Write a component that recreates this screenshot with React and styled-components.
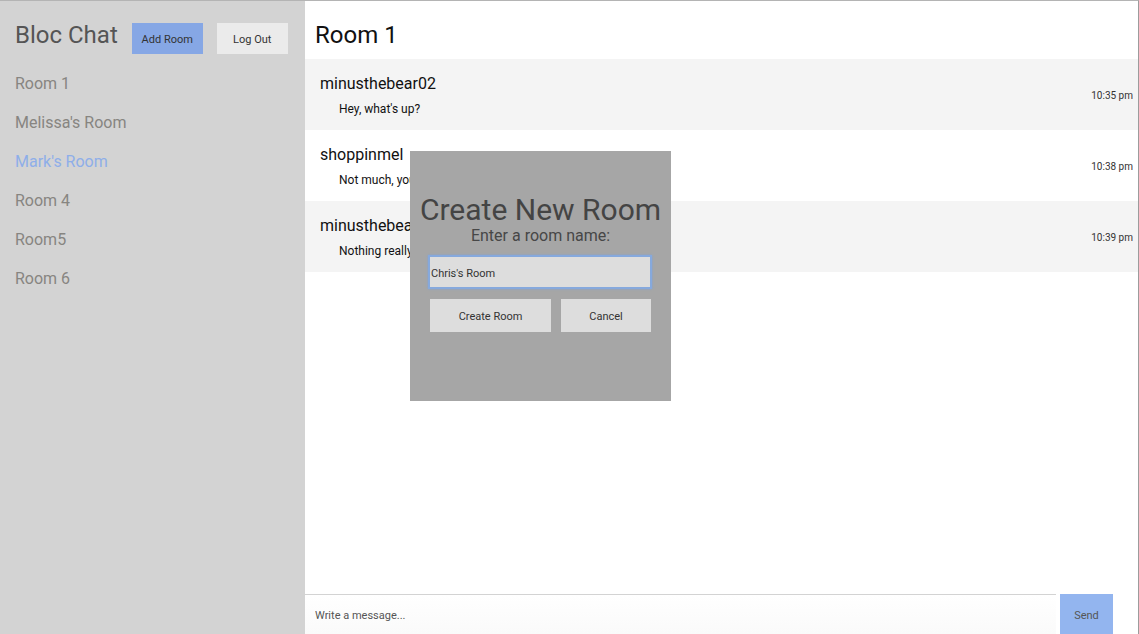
import React, { useState } from "react";
import styled, { createGlobalStyle } from "styled-components";

const GlobalStyle = createGlobalStyle`
  html, body {
    margin: 0;
    padding: 0;
    background: #ffffff;
  }
  body {
    font-family: Roboto, "Liberation Sans", Arial, sans-serif;
  }
  * {
    box-sizing: border-box;
  }
`;

const rooms = ["Room 1", "Melissa's Room", "Mark's Room", "Room 4", "Room5", "Room 6"];

const messages = [
  { user: "minusthebear02", text: "Hey, what's up?", time: "10:35 pm" },
  { user: "shoppinmel", text: "Not much, you?", time: "10:38 pm" },
  { user: "minusthebear02", text: "Nothing really.", time: "10:39 pm" },
];

const App = () => {
  const [active] = useState("Mark's Room");
  const [roomName, setRoomName] = useState("Chris's Room");

  return (
    <>
      <GlobalStyle />
      <Layout>
        <Sidebar>
          <SidebarHeader>
            <AppTitle>Bloc Chat</AppTitle>
            <HeaderButton $primary>Add Room</HeaderButton>
            <HeaderButton>Log Out</HeaderButton>
          </SidebarHeader>
          <RoomList>
            {rooms.map((room) => (
              <RoomItem key={room} $active={room === active}>
                {room}
              </RoomItem>
            ))}
          </RoomList>
        </Sidebar>

        <Main>
          <RoomTitle>Room 1</RoomTitle>
          <MessageList>
            {messages.map((m, i) => (
              <MessageRow key={i} $shaded={i % 2 === 0}>
                <MessageBody>
                  <Username>{m.user}</Username>
                  <MessageText>{m.text}</MessageText>
                </MessageBody>
                <Time>{m.time}</Time>
              </MessageRow>
            ))}
          </MessageList>
          <Composer>
            <MessageInput placeholder="Write a message..." />
            <SendButton>Send</SendButton>
          </Composer>
        </Main>

        <Modal>
          <ModalTitle>Create New Room</ModalTitle>
          <ModalLabel>Enter a room name:</ModalLabel>
          <RoomInput
            value={roomName}
            onChange={(e) => setRoomName(e.target.value)}
          />
          <ModalActions>
            <ModalButton $width={121}>Create Room</ModalButton>
            <ModalButton $width={90}>Cancel</ModalButton>
          </ModalActions>
        </Modal>
      </Layout>
    </>
  );
};

export default App;

const Layout = styled.div`
  position: relative;
  display: flex;
  height: 634px;
  border-top: 1px solid #b4b4b4;
  border-right: 1px solid #9c9c9c;
  overflow: hidden;
`;

const Sidebar = styled.aside`
  width: 305px;
  flex-shrink: 0;
  background: #d3d3d3;
`;

const SidebarHeader = styled.div`
  display: flex;
  align-items: flex-start;
  padding: 18px 0 0 15px;
`;

const AppTitle = styled.h1`
  margin: 0 14px 0 0;
  font-size: 24px;
  font-weight: 400;
  line-height: 32px;
  color: #555555;
`;

const HeaderButton = styled.button`
  width: 71px;
  height: 31px;
  margin: 4px 14px 0 0;
  border: none;
  padding: 2px 0 0;
  font-family: inherit;
  font-size: 11px;
  color: #333333;
  background: ${({ $primary }) => ($primary ? "#86a7e5" : "#ebebeb")};
`;

const RoomList = styled.ul`
  list-style: none;
  margin: 0;
  padding: 10px 0 0 15px;
`;

const RoomItem = styled.li`
  font-size: 16px;
  line-height: 39px;
  color: ${({ $active }) => ($active ? "#8eaee9" : "#878581")};
`;

const Main = styled.main`
  flex: 1;
  display: flex;
  flex-direction: column;
  min-width: 0;
`;

const RoomTitle = styled.h2`
  height: 58px;
  margin: 0;
  padding: 10px 0 0 10px;
  font-size: 24px;
  font-weight: 400;
  line-height: 48px;
  color: #111111;
`;

const MessageList = styled.div`
  flex: 1;
`;

const MessageRow = styled.div`
  display: flex;
  align-items: center;
  height: 71px;
  padding: 0 5px 0 15px;
  background: ${({ $shaded }) => ($shaded ? "#f4f4f4" : "#ffffff")};
`;

const MessageBody = styled.div`
  flex: 1;
  align-self: flex-start;
  padding-top: 15px;
`;

const Username = styled.div`
  font-size: 16px;
  line-height: 20px;
  color: #111111;
`;

const MessageText = styled.div`
  margin: 7px 0 0 19px;
  font-size: 12px;
  line-height: 16px;
  color: #111111;
`;

const Time = styled.span`
  margin-top: 2px;
  font-size: 10px;
  color: #333333;
`;

const Composer = styled.div`
  display: flex;
  height: 40px;
  padding-right: 25px;
`;

const MessageInput = styled.input`
  flex: 1;
  height: 40px;
  border: none;
  border-top: 1px solid #d3d3d3;
  padding: 2px 10px 0;
  font-family: inherit;
  font-size: 11px;
  background: linear-gradient(#ffffff, #fafafa);
  outline: none;

  &::placeholder {
    color: #555555;
  }
`;

const SendButton = styled.button`
  width: 53px;
  height: 40px;
  margin-left: 4px;
  border: none;
  padding: 2px 0 0;
  font-family: inherit;
  font-size: 11px;
  color: #555555;
  background: #93b5ef;
`;

const Modal = styled.div`
  position: absolute;
  left: 410px;
  top: 150px;
  width: 261px;
  height: 250px;
  padding-top: 42px;
  background: #a6a6a6;
  text-align: center;
`;

const ModalTitle = styled.h3`
  margin: 0;
  font-size: 30px;
  font-weight: 400;
  line-height: 34px;
  color: #444444;
`;

const ModalLabel = styled.p`
  margin: 0;
  font-size: 16px;
  line-height: 18px;
  color: #474747;
`;

const RoomInput = styled.input`
  display: block;
  width: 224px;
  height: 34px;
  margin: 10px 0 0 18px;
  padding: 2px 1px 0;
  border: 2px solid #86a9dd;
  box-shadow: 0 0 2px #7fa2d8;
  background: #dddddd;
  font-family: inherit;
  font-size: 11px;
  color: #333333;
  outline: none;
`;

const ModalActions = styled.div`
  display: flex;
  gap: 10px;
  margin-top: 10px;
  padding-left: 20px;
`;

const ModalButton = styled.button`
  width: ${({ $width }) => $width}px;
  height: 33px;
  border: none;
  padding: 2px 0 0;
  font-family: inherit;
  font-size: 11px;
  color: #333333;
  background: #dddddd;
`;
